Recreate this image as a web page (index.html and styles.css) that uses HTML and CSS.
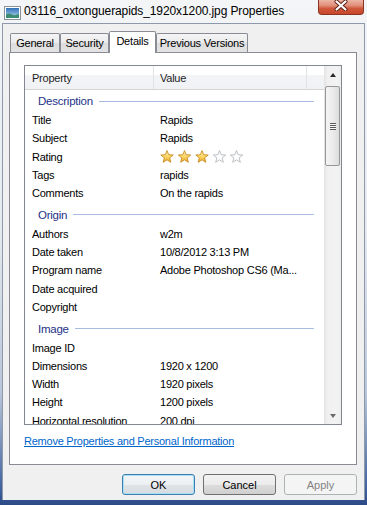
FILE: index.html
```html
<!DOCTYPE html>
<html>
  <head>
    <title>03116_oxtonguerapids_1920x1200.jpg Properties</title>
    <link rel="stylesheet" href="styles.css">
  </head>
  <body>
    <div class="window">
      <div class="titlebar">
        <svg class="title-icon" width="17" height="14" viewBox="0 0 17 14">
          <defs>
            <linearGradient id="sky" x1="0" y1="0" x2="0" y2="1">
              <stop offset="0" stop-color="#2f6fb8"/>
              <stop offset="1" stop-color="#b8dcf0"/>
            </linearGradient>
          </defs>
          <rect x="0.5" y="0.5" width="16" height="13" fill="#fff" stroke="#8a9299"/>
          <rect x="2" y="2" width="13" height="10" fill="url(#sky)"/>
          <path d="M2 12 L2 8.5 Q5 6.5 8 8.5 T15 7.5 L15 12 Z" fill="#3c8c74"/>
        </svg>
        <span class="title-text">03116_oxtonguerapids_1920x1200.jpg Properties</span>
        <div class="close-btn">
          <svg width="14" height="11" viewBox="0 0 14 11">
            <path d="M2.5 1.5 L11.5 9.5 M11.5 1.5 L2.5 9.5" stroke="#5b1d12" stroke-width="4" stroke-linecap="round"/>
            <path d="M2.5 1.5 L11.5 9.5 M11.5 1.5 L2.5 9.5" stroke="#fff" stroke-width="2.2" stroke-linecap="round"/>
          </svg>
        </div>
      </div>

      <div class="client">
        <div class="tabs">
          <div class="tab tab-general">General</div>
          <div class="tab tab-security">Security</div>
          <div class="tab tab-details tab-selected">Details</div>
          <div class="tab tab-versions">Previous Versions</div>
        </div>

        <div class="panel">
          <div class="listview">
            <div class="list-main">
              <div class="list-header">
                <div class="col-prop">Property</div>
                <div class="col-val">Value</div>
                <div class="col-rest"></div>
              </div>
              <div class="list-body">
                <div class="group group-first"><span>Description</span></div>
                <div class="row"><div class="col-prop">Title</div><div class="col-val">Rapids</div></div>
                <div class="row"><div class="col-prop">Subject</div><div class="col-val">Rapids</div></div>
                <div class="row">
                  <div class="col-prop">Rating</div>
                  <div class="col-val">
                    <svg class="stars" width="84" height="14" viewBox="0 0 84 14">
                      <defs>
                        <linearGradient id="gold" x1="0" y1="0" x2="0" y2="1">
                          <stop offset="0" stop-color="#fff7c4"/>
                          <stop offset="0.5" stop-color="#fbd766"/>
                          <stop offset="1" stop-color="#eaa928"/>
                        </linearGradient>
                        <polygon id="star" points="7,0.6 8.65,4.73 13.2,5 9.66,7.87 10.82,12.3 7,9.8 3.18,12.3 4.34,7.87 0.8,5 5.35,4.73"/>
                      </defs>
                      <use href="#star" x="0" fill="url(#gold)" stroke="#c98a1e" stroke-width="0.9"/>
                      <use href="#star" x="17.5" fill="url(#gold)" stroke="#c98a1e" stroke-width="0.9"/>
                      <use href="#star" x="35" fill="url(#gold)" stroke="#c98a1e" stroke-width="0.9"/>
                      <use href="#star" x="52.5" fill="#fff" stroke="#b4b8bc" stroke-width="0.9"/>
                      <use href="#star" x="69.5" fill="#fff" stroke="#b4b8bc" stroke-width="0.9"/>
                    </svg>
                  </div>
                </div>
                <div class="row"><div class="col-prop">Tags</div><div class="col-val">rapids</div></div>
                <div class="row"><div class="col-prop">Comments</div><div class="col-val">On the rapids</div></div>

                <div class="group"><span>Origin</span></div>
                <div class="row"><div class="col-prop">Authors</div><div class="col-val">w2m</div></div>
                <div class="row"><div class="col-prop">Date taken</div><div class="col-val">10/8/2012 3:13 PM</div></div>
                <div class="row"><div class="col-prop">Program name</div><div class="col-val">Adobe Photoshop CS6 (Ma...</div></div>
                <div class="row"><div class="col-prop">Date acquired</div><div class="col-val"></div></div>
                <div class="row"><div class="col-prop">Copyright</div><div class="col-val"></div></div>

                <div class="group"><span>Image</span></div>
                <div class="row"><div class="col-prop">Image ID</div><div class="col-val"></div></div>
                <div class="row"><div class="col-prop">Dimensions</div><div class="col-val">1920 x 1200</div></div>
                <div class="row"><div class="col-prop">Width</div><div class="col-val">1920 pixels</div></div>
                <div class="row"><div class="col-prop">Height</div><div class="col-val">1200 pixels</div></div>
                <div class="row"><div class="col-prop">Horizontal resolution</div><div class="col-val">200 dpi</div></div>
              </div>
            </div>
            <div class="scrollbar">
              <div class="sb-btn"><span class="arrow-up"></span></div>
              <div class="sb-thumb"><span class="grip"></span></div>
              <div class="sb-track"></div>
              <div class="sb-btn"><span class="arrow-down"></span></div>
            </div>
          </div>
          <a class="remove-link" href="#">Remove Properties and Personal Information</a>
        </div>

        <div class="buttons">
          <button class="btn btn-default">OK</button>
          <button class="btn">Cancel</button>
          <button class="btn" disabled>Apply</button>
        </div>
      </div>
    </div>
  </body>
</html>
```

FILE: styles.css
```css
body {
  margin: 0px;
  width: 367px;
  height: 505px;
  overflow: hidden;
  font-family: "Liberation Sans", Arial, sans-serif;
  font-size: 11px;
  color: #000000;
  background: linear-gradient(to bottom, #f3f5f7 0%, #e6eaee 45%, #b8c5d8 78%, #3f619e 97%, #2b4a86 100%);
}
.window {
  display: flex;
  flex-direction: column;
  height: 505px;
}

/* title bar */
.titlebar {
  height: 23px;
  display: flex;
  align-items: flex-start;
}
.title-icon {
  margin: 6px 3px 0px 4px;
}
.title-text {
  margin-top: 4px;
  font-size: 12px;
  line-height: 14px;
  letter-spacing: -0.1px;
}
.close-btn {
  margin-left: auto;
  margin-right: 3px;
  width: 46px;
  height: 15px;
  box-sizing: border-box;
  border: 1px solid #8a3426;
  border-top: none;
  border-radius: 0px 0px 4px 4px;
  background: linear-gradient(to bottom, #ecb5a6 0%, #e08e78 40%, #d0583c 60%, #c8462a 100%);
  display: flex;
  justify-content: center;
  align-items: flex-start;
}

/* client area */
.client {
  margin: 0px 2px;
  height: 477px;
  box-sizing: border-box;
  border: 1px solid #8e9aab;
  border-bottom: none;
  background-color: #f0f0f0;
  display: flex;
  flex-direction: column;
}
.tabs {
  display: flex;
  align-items: flex-end;
  height: 19px;
  margin: 9px 0px 0px 7px;
}
.tab {
  height: 19px;
  box-sizing: border-box;
  border: 1px solid #898c95;
  border-bottom: none;
  border-radius: 2px 2px 0px 0px;
  background: linear-gradient(to bottom, #f5f5f5 0%, #ebebeb 50%, #dddddd 51%, #e3e3e3 100%);
  text-align: center;
  line-height: 18px;
  letter-spacing: -0.2px;
}
.tab-general { width: 50px; }
.tab-security { width: 49px; }
.tab-details { width: 47px; }
.tab-versions { width: 92px; }
.tab-selected {
  position: relative;
  z-index: 1;
  height: 22px;
  margin-bottom: -1px;
  background: #ffffff;
  line-height: 19px;
}

.panel {
  margin: 0px 7px 0px 6px;
  height: 413px;
  box-sizing: border-box;
  border: 1px solid #898c95;
  background-color: #ffffff;
  padding: 12px 0px 0px 14px;
}

/* list view */
.listview {
  width: 318px;
  height: 360px;
  box-sizing: border-box;
  border: 1px solid #828790;
  display: flex;
  overflow: hidden;
}
.list-main {
  flex: 1;
  overflow: hidden;
  letter-spacing: -0.24px;
}
.list-header {
  display: flex;
  height: 24px;
  box-sizing: border-box;
  border-bottom: 1px solid #d5d5d5;
  background: linear-gradient(to bottom, #ffffff 0%, #ffffff 40%, #f3f4f6 41%, #f1f2f5 100%);
  line-height: 24px;
  color: #1e1e1e;
}
.col-prop {
  width: 129px;
  flex: none;
  box-sizing: border-box;
  padding-left: 7px;
  white-space: nowrap;
}
.col-val {
  width: 153px;
  flex: none;
  box-sizing: border-box;
  padding-left: 6px;
  white-space: nowrap;
  display: flex;
  align-items: center;
}
.list-header .col-prop,
.list-header .col-val {
  border-right: 1px solid #e2e3e5;
}
.col-rest {
  flex: 1;
}
.row {
  display: flex;
  align-items: center;
  height: 18.25px;
}
.group {
  display: flex;
  align-items: center;
  height: 22.5px;
  box-sizing: border-box;
  padding: 2.5px 10px 0px 13px;
  color: #1e3287;
  font-size: 11.5px;
}
.group-first {
  height: 21px;
  padding-top: 1px;
}
.group::after {
  content: "";
  flex: 1;
  height: 1px;
  margin-left: 6px;
  background-color: #a9bde2;
}
.stars {
  display: block;
}

/* scrollbar */
.scrollbar {
  width: 17px;
  flex: none;
  display: flex;
  flex-direction: column;
  background: linear-gradient(to right, #e3e3e3 0%, #f0f0f0 20%, #f3f3f3 80%, #ececec 100%);
}
.sb-btn {
  height: 17px;
  display: flex;
  justify-content: center;
  align-items: center;
}
.arrow-up {
  width: 0px;
  height: 0px;
  border-left: 3.5px solid transparent;
  border-right: 3.5px solid transparent;
  border-bottom: 4px solid #2a2a2a;
}
.arrow-down {
  width: 0px;
  height: 0px;
  border-left: 3.5px solid transparent;
  border-right: 3.5px solid transparent;
  border-top: 4px solid #6a6a6a;
}
.sb-thumb {
  margin: 3px 1px 0px 1px;
  height: 80px;
  box-sizing: border-box;
  border: 1px solid #979797;
  border-radius: 2px;
  background: linear-gradient(to right, #f4f4f4 0%, #ececec 50%, #dcdcdc 100%);
  display: flex;
  justify-content: center;
  align-items: center;
}
.grip {
  width: 6px;
  height: 7px;
  background: repeating-linear-gradient(to bottom, #5a5a5a 0px, #5a5a5a 1px, #f8f8f8 1px, #f8f8f8 2px);
}
.sb-track {
  flex: 1;
}

.remove-link {
  display: block;
  margin-top: 9px;
  color: #0066cc;
  line-height: 14px;
  letter-spacing: -0.24px;
}

/* dialog buttons */
.buttons {
  display: flex;
  justify-content: flex-end;
  gap: 8px;
  margin-top: 9px;
  padding-right: 7px;
}
.btn {
  width: 73px;
  height: 21px;
  box-sizing: border-box;
  border: 1px solid #707070;
  border-radius: 3px;
  background: linear-gradient(to bottom, #f2f2f2 0%, #ebebeb 50%, #dddddd 51%, #cfcfcf 100%);
  font-family: "Liberation Sans", Arial, sans-serif;
  font-size: 11px;
  color: #000000;
  padding: 0px;
}
.btn-default {
  border-color: #3c7fb1;
  box-shadow: inset 0px 0px 0px 1px #a8def7;
  background: linear-gradient(to bottom, #f4f6f8 0%, #ecf0f3 50%, #e0e4e8 51%, #d6dbe0 100%);
}
.btn:disabled {
  border-color: #adb2b5;
  background: #f4f4f4;
  color: #838383;
}
```
